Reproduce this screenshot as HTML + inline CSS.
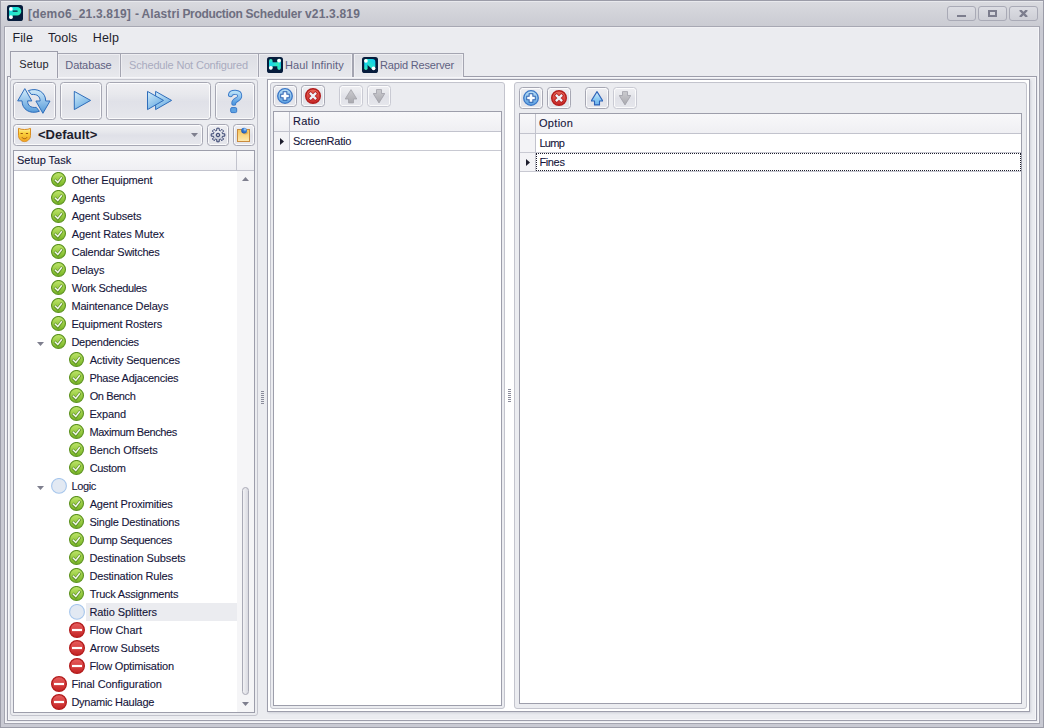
<!DOCTYPE html>
<html><head><meta charset="utf-8"><title>Alastri Production Scheduler</title>
<style>
*{box-sizing:border-box;margin:0;padding:0}
html,body{width:1044px;height:728px;overflow:hidden}
body{position:relative;background:#c9cad3;font-family:"Liberation Sans",sans-serif;font-size:11px;color:#1e1e2d}
.abs{position:absolute;display:block}
div{position:absolute}
/* window frame */
#frame{left:0;top:0;width:1044px;height:728px;border:1px solid #9b9ca8}
#title{left:1px;top:0;width:1042px;height:27px;background:linear-gradient(#dadbe0 0,#d2d3d9 45%,#cacbd2 100%);border-top:1px solid #9b9ca8}
#title:before{content:"";position:absolute;left:0;top:0;width:100%;height:1px;background:#e8e9ed}
#ttext{left:0;top:7px;font-size:12px;font-weight:bold;color:#6d6e80;white-space:nowrap;letter-spacing:-0.02px}
#client{left:4px;top:27px;width:1036px;height:697px;background:#ebecf0;border:1px solid #a4a5b0;border-top:none}
#client:before{content:"";position:absolute;left:0;top:0;right:0;bottom:0;border:1px solid #f6f6f9;border-top-color:#f1f1f4}
.wb{top:6px;width:29px;height:15px;border:1px solid #a9aab6;border-radius:3px;background:linear-gradient(#dcdde3,#cecfd6)}
.menu{top:31px;font-size:12.5px;color:#1e1e2d;white-space:nowrap}
/* tabs */
.tab{top:53px;height:24px;border:1px solid #a4a5b1;border-bottom:none;background:linear-gradient(#dddee4,#e2e3e8 50%,#e8e9ed);white-space:nowrap;box-shadow:inset 1px 1px 0 #eeeef2,inset -1px 0 0 #eeeef2}
.tab span{position:absolute;top:5px;font-size:11px;color:#5f6182;letter-spacing:-0.2px}
#page{left:7px;top:76px;width:1030px;height:645px;border:1px solid #9d9eab;background:#ebecf0}
#page:before{content:"";position:absolute;left:0;top:0;right:0;bottom:0;border:1px solid #f6f6f9}
.grp{border:1px solid #c3c4cd;border-radius:3px;background:#ebecf0}
.btn{border:1px solid #a6a7b3;border-radius:3.5px;background:linear-gradient(#efeff3 0,#e8e9ed 30%,#e0e1e8 52%,#e6e7ec 100%);box-shadow:inset 0 0 0 1px rgba(255,255,255,.8)}
.btn.dis{border-color:#c9cad3}
.grid{border:1px solid #9d9eab;background:#fff}
.hdr{left:0;top:0;right:0;height:20px;background:linear-gradient(#f8f8fa,#efeff3);border-bottom:1px solid #c2c3cd}
.tx{height:18px;line-height:18px;white-space:nowrap;font-size:11px;letter-spacing:-0.22px;color:#15153a;-webkit-text-stroke:.1px #15153a}
.sel{left:86px;width:151px;height:18px;background:#ebecf0}
.vline{width:1px;background:#c2c3cd}
.hline{height:1px;background:#c8c9d2}
</style></head><body>
<svg width="0" height="0" style="position:absolute">
<defs>
<linearGradient id="gg" x1="0" y1="0" x2="0" y2="1"><stop offset="0" stop-color="#bfe66a"/><stop offset="1" stop-color="#76b422"/></linearGradient>
<linearGradient id="rg" x1="0" y1="0" x2="0" y2="1"><stop offset="0" stop-color="#e86060"/><stop offset="1" stop-color="#c42222"/></linearGradient>
<linearGradient id="bg1" x1="0" y1="0" x2="0" y2="1"><stop offset="0" stop-color="#bfe2f7"/><stop offset="1" stop-color="#5a9fe0"/></linearGradient><linearGradient id="rg2" x1="0" y1="0" x2="0" y2="1"><stop offset="0" stop-color="#ea6a5a"/><stop offset="1" stop-color="#c82626"/></linearGradient>
<linearGradient id="bg2" x1="0" y1="0" x2="0" y2="1"><stop offset="0" stop-color="#bfe0f8"/><stop offset="1" stop-color="#3f86cf"/></linearGradient>
<linearGradient id="cy" gradientUnits="userSpaceOnUse" x1="2" y1="2" x2="13" y2="12"><stop offset="0" stop-color="#10d8f0"/><stop offset="1" stop-color="#38f0b0"/></linearGradient>
<linearGradient id="cy2" gradientUnits="userSpaceOnUse" x1="0" y1="2" x2="0" y2="13"><stop offset="0" stop-color="#3cf0b4"/><stop offset=".45" stop-color="#14d2f0"/><stop offset="1" stop-color="#3cf0b4"/></linearGradient>
<linearGradient id="cy3" gradientUnits="userSpaceOnUse" x1="3" y1="0" x2="13" y2="0"><stop offset="0" stop-color="#14d2f0"/><stop offset="1" stop-color="#3cf0a8"/></linearGradient>
<linearGradient id="cy4" gradientUnits="userSpaceOnUse" x1="13" y1="2" x2="5" y2="10"><stop offset="0" stop-color="#0cc8f4"/><stop offset="1" stop-color="#30ecc0"/></linearGradient>
<linearGradient id="gr" x1="0" y1="0" x2="0" y2="1"><stop offset="0" stop-color="#d4d4d8"/><stop offset="1" stop-color="#9c9ca4"/></linearGradient>
<linearGradient id="yl" x1="0" y1="0" x2="0" y2="1"><stop offset="0" stop-color="#fbd25a"/><stop offset="1" stop-color="#fde9a8"/></linearGradient>

<linearGradient id="tri" x1="0" y1="0" x2="0.6" y2="1"><stop offset="0" stop-color="#d6eefb"/><stop offset="1" stop-color="#69ace2"/></linearGradient>
<linearGradient id="arw" gradientUnits="userSpaceOnUse" x1="0" y1="88" x2="0" y2="114"><stop offset="0" stop-color="#d9f0fc"/><stop offset="1" stop-color="#4f96d8"/></linearGradient>
<linearGradient id="qg" x1="0" y1="0" x2="0" y2="1"><stop offset="0" stop-color="#b4def7"/><stop offset="1" stop-color="#559be0"/></linearGradient>
<linearGradient id="mk" x1="0" y1="0" x2="0" y2="1"><stop offset="0" stop-color="#fff3a8"/><stop offset=".35" stop-color="#fad23c"/><stop offset="1" stop-color="#f0a222"/></linearGradient>
<linearGradient id="nt" x1="0" y1="0" x2="0" y2="1"><stop offset="0" stop-color="#f5c55c"/><stop offset="1" stop-color="#fdeab0"/></linearGradient>
<linearGradient id="gearg" x1="0" y1="0" x2="0" y2="1"><stop offset="0" stop-color="#fafbfd"/><stop offset="1" stop-color="#c3c8d4"/></linearGradient>
<linearGradient id="upb" x1="0" y1="0" x2="0" y2="1"><stop offset="0" stop-color="#dcf1fc"/><stop offset=".55" stop-color="#8ccaf3"/><stop offset="1" stop-color="#6cb2ec"/></linearGradient>
<linearGradient id="upg" x1="0" y1="0" x2="0" y2="1"><stop offset="0" stop-color="#cbcbcf"/><stop offset="1" stop-color="#a9a9af"/></linearGradient>
<radialGradient id="pin" cx=".65" cy=".3" r=".7"><stop offset="0" stop-color="#b8dcf8"/><stop offset=".45" stop-color="#3a7fd6"/><stop offset="1" stop-color="#1f57b0"/></radialGradient>
<path id="dnarrow" d="M6 13.9L0.2 4.5H3.5V0.6H8.5V4.5H11.8z"/><path id="uparrow" d="M6 0.6L11.8 10H8.5V13.9H3.5V10H0.2z"/>
<g id="ic-g"><circle cx="7.5" cy="7.45" r="6.95" fill="url(#gg)" stroke="#5e9322" stroke-width="1.15"/><path d="M3.5 7.6l3.3 3.2 4.4-5.9" fill="none" stroke="#4a7a1e" stroke-width="3" opacity=".72"/><path d="M3.9 7.7l2.9 2.8 4-5.3" fill="none" stroke="#f4f8ee" stroke-width="1.45"/></g>
<g id="ic-r"><circle cx="8" cy="8" r="7.35" fill="url(#rg)" stroke="#b21a1a" stroke-width="1.3"/><rect x="3" y="6.9" width="10" height="2.2" fill="#fff"/></g>
<g id="ic-e"><circle cx="8" cy="7.9" r="7.4" fill="#e2e9f3" stroke="#a6c6ec" stroke-width="1.1"/></g>
<g id="ic-add"><circle cx="8" cy="8" r="7.3" fill="url(#bg1)" stroke="#3a76c6" stroke-width="1.3"/><path d="M8 3.3v9.4M3.3 8h9.4" stroke="#2c60b0" stroke-width="4.7"/><path d="M8 4.2v7.6M4.2 8h7.6" stroke="#fbfdff" stroke-width="2.7"/></g>
<g id="ic-del"><circle cx="8" cy="8" r="7.3" fill="url(#rg2)" stroke="#b21c1c" stroke-width="1.4"/><path d="M4.3 4.3l7.4 7.4M11.7 4.3l-7.4 7.4" stroke="#b02020" stroke-width="3.9"/><path d="M4.9 4.9l6.2 6.2M11.1 4.9l-6.2 6.2" stroke="#eef3f9" stroke-width="2.3"/></g>
</defs></svg>

<div id="frame"></div>
<div id="title"></div><div style="left:4px;top:26px;width:1036px;height:1px;background:#a7a8b3"></div>
<svg class="abs" style="left:7px;top:5px" width="16" height="16"><rect width="16" height="16" rx="2.6" fill="#061c3c"/><path d="M3.9 12.2V3.8H10.1a2.4 2.4 0 0 1 0 4.8H3.9" fill="none" stroke="url(#cy)" stroke-width="3.6" stroke-linejoin="round"/><circle cx="3.9" cy="3.9" r="1.85" fill="#fff"/><circle cx="3.9" cy="12.2" r="1.85" fill="#fff"/></svg>
<div id="ttext"><span style="position:absolute;left:28.00px;top:0;letter-spacing:0.187px">[demo6_21.3.819]</span><span style="position:absolute;left:135.00px;top:0;letter-spacing:0.000px">-</span><span style="position:absolute;left:141.40px;top:0;letter-spacing:0.150px">Alastri</span><span style="position:absolute;left:182.40px;top:0;letter-spacing:-0.333px">Production</span><span style="position:absolute;left:245.60px;top:0;letter-spacing:-0.225px">Scheduler</span><span style="position:absolute;left:305.00px;top:0;letter-spacing:0.188px">v21.3.819</span></div>
<div class="wb" style="left:947px"><div style="left:9px;top:8px;width:9px;height:2px;background:#7c7d8d"></div></div>
<div class="wb" style="left:978px"><div style="left:9px;top:3px;width:9px;height:7px;border:2px solid #7c7d8d"></div></div>
<div class="wb" style="left:1009px"><svg class="abs" style="left:9px;top:3px" width="9" height="7"><path d="M1 0l7 7M8 0L1 7" stroke="#7c7d8d" stroke-width="2.4"/></svg></div>

<div id="client"></div>
<div class="menu" style="left:12.6px;letter-spacing:.05px">File</div>
<div class="menu" style="left:48px">Tools</div>
<div class="menu" style="left:92.8px;letter-spacing:.12px">Help</div>

<!-- tab page -->
<div id="page"></div>
<!-- tabs -->
<div class="tab" style="left:57px;width:64px"><span style="left:7.3px;letter-spacing:-.1px">Database</span></div>
<div class="tab" style="left:120px;width:139px"><span style="left:8px;color:#a9abbf;letter-spacing:-.17px">Schedule Not Configured</span></div>
<div class="tab" style="left:258px;width:95px"><span style="left:26px;letter-spacing:.1px">Haul Infinity</span>
 <svg class="abs" style="left:8px;top:3px" width="16" height="16"><rect width="16" height="16" rx="2.6" fill="#061c3c"/><path d="M3.8 3.9V10.7M12.1 3.6V11.1" fill="none" stroke="url(#cy2)" stroke-width="3.6" stroke-linecap="round"/><path d="M3.8 7.3H12.1" stroke="url(#cy3)" stroke-width="4"/><circle cx="12.1" cy="3.6" r="1.85" fill="#fff"/><circle cx="3.8" cy="10.8" r="1.85" fill="#fff"/></svg></div>
<div class="tab" style="left:353px;width:111px"><span style="left:26px;letter-spacing:-.17px">Rapid Reserver</span>
 <svg class="abs" style="left:8px;top:3px" width="16" height="16"><rect width="16" height="16" rx="2.6" fill="#061c3c"/><path d="M3.9 2.1H10.4Q13.4 2.1 13.4 5V9.4L12.9 10.8L10.6 12.6L4.5 7z" fill="url(#cy4)"/><path d="M3.9 3.8V11.2" fill="none" stroke="url(#cy2)" stroke-width="3.4" stroke-linecap="round"/><circle cx="3.9" cy="3.8" r="1.85" fill="#fff"/><circle cx="11.6" cy="11.3" r="1.85" fill="#fff"/></svg></div>
<div class="tab" style="left:10px;top:51px;width:48px;height:27px;background:#ebecf0;border-color:#9d9eab"><span style="left:8.3px;top:6px;color:#1e1e2d;letter-spacing:.12px">Setup</span></div>

<!-- left group -->
<div class="grp" style="left:10px;top:79px;width:248px;height:637px"></div>
<div class="btn" style="left:13px;top:82px;width:43px;height:38px"></div>
<div class="btn" style="left:60px;top:82px;width:42px;height:38px"></div>
<div class="btn" style="left:106px;top:82px;width:105px;height:38px"></div>
<div class="btn" style="left:215px;top:82px;width:40px;height:38px"></div>
<div class="btn" style="left:13px;top:124px;width:190px;height:22px"></div>
<div class="btn" style="left:207px;top:124px;width:22px;height:22px"></div>
<div class="btn" style="left:233px;top:124px;width:22px;height:22px"></div>
<div style="left:38px;top:127px;font-size:13px;font-weight:bold;color:#1e1e2d;line-height:16px">&lt;Default&gt;</div>
<svg class="abs" style="left:191px;top:133px" width="7" height="4"><path d="M0 0h7L3.5 4z" fill="#7e7f8e"/></svg>

<!-- tree -->
<div class="grid" style="left:13px;top:150px;width:242px;height:563px">
  <div class="hdr"></div>
  <div class="vline" style="left:222px;top:0;height:20px"></div>
  <div style="left:223px;top:20px;width:17px;height:541px;background:#f5f5f7"></div>
</div>
<div class="tx" style="left:17px;top:151px;height:19px;line-height:19px;letter-spacing:0">Setup Task</div>
<svg class="abs" style="left:51px;top:172px" width="16" height="16"><use href="#ic-g"/></svg>
<div class="tx" style="left:71.70px;top:171px;letter-spacing:-0.164px">Other Equipment</div>
<svg class="abs" style="left:51px;top:190px" width="16" height="16"><use href="#ic-g"/></svg>
<div class="tx" style="left:71.70px;top:189px;letter-spacing:-0.180px">Agents</div>
<svg class="abs" style="left:51px;top:208px" width="16" height="16"><use href="#ic-g"/></svg>
<div class="tx" style="left:71.70px;top:207px;letter-spacing:-0.150px">Agent Subsets</div>
<svg class="abs" style="left:51px;top:226px" width="16" height="16"><use href="#ic-g"/></svg>
<div class="tx" style="left:71.70px;top:225px;letter-spacing:-0.056px">Agent Rates Mutex</div>
<svg class="abs" style="left:51px;top:244px" width="16" height="16"><use href="#ic-g"/></svg>
<div class="tx" style="left:71.70px;top:243px;letter-spacing:-0.231px">Calendar Switches</div>
<svg class="abs" style="left:51px;top:262px" width="16" height="16"><use href="#ic-g"/></svg>
<div class="tx" style="left:71.40px;top:261px;letter-spacing:-0.100px">Delays</div>
<svg class="abs" style="left:51px;top:280px" width="16" height="16"><use href="#ic-g"/></svg>
<div class="tx" style="left:71.70px;top:279px;letter-spacing:-0.346px">Work Schedules</div>
<svg class="abs" style="left:51px;top:298px" width="16" height="16"><use href="#ic-g"/></svg>
<div class="tx" style="left:71.40px;top:297px;letter-spacing:-0.153px">Maintenance Delays</div>
<svg class="abs" style="left:51px;top:316px" width="16" height="16"><use href="#ic-g"/></svg>
<div class="tx" style="left:71.40px;top:315px;letter-spacing:-0.175px">Equipment Rosters</div>
<svg class="abs" style="left:37px;top:342px" width="7" height="4"><path d="M0 0h7L3.5 4z" fill="#7e7f8e"/></svg>
<svg class="abs" style="left:51px;top:334px" width="16" height="16"><use href="#ic-g"/></svg>
<div class="tx" style="left:71.40px;top:333px;letter-spacing:-0.236px">Dependencies</div>
<svg class="abs" style="left:69px;top:352px" width="16" height="16"><use href="#ic-g"/></svg>
<div class="tx" style="left:89.70px;top:351px;letter-spacing:-0.159px">Activity Sequences</div>
<svg class="abs" style="left:69px;top:370px" width="16" height="16"><use href="#ic-g"/></svg>
<div class="tx" style="left:89.40px;top:369px;letter-spacing:-0.238px">Phase Adjacencies</div>
<svg class="abs" style="left:69px;top:388px" width="16" height="16"><use href="#ic-g"/></svg>
<div class="tx" style="left:89.70px;top:387px;letter-spacing:-0.400px">On Bench</div>
<svg class="abs" style="left:69px;top:406px" width="16" height="16"><use href="#ic-g"/></svg>
<div class="tx" style="left:89.40px;top:405px;letter-spacing:-0.140px">Expand</div>
<svg class="abs" style="left:69px;top:424px" width="16" height="16"><use href="#ic-g"/></svg>
<div class="tx" style="left:89.40px;top:423px;letter-spacing:-0.407px">Maximum Benches</div>
<svg class="abs" style="left:69px;top:442px" width="16" height="16"><use href="#ic-g"/></svg>
<div class="tx" style="left:89.40px;top:441px;letter-spacing:-0.050px">Bench Offsets</div>
<svg class="abs" style="left:69px;top:460px" width="16" height="16"><use href="#ic-g"/></svg>
<div class="tx" style="left:89.70px;top:459px;letter-spacing:-0.340px">Custom</div>
<svg class="abs" style="left:37px;top:486px" width="7" height="4"><path d="M0 0h7L3.5 4z" fill="#7e7f8e"/></svg>
<svg class="abs" style="left:51px;top:478px" width="16" height="16"><use href="#ic-e"/></svg>
<div class="tx" style="left:71.40px;top:477px;letter-spacing:-0.350px">Logic</div>
<svg class="abs" style="left:69px;top:496px" width="16" height="16"><use href="#ic-g"/></svg>
<div class="tx" style="left:89.70px;top:495px;letter-spacing:-0.162px">Agent Proximities</div>
<svg class="abs" style="left:69px;top:514px" width="16" height="16"><use href="#ic-g"/></svg>
<div class="tx" style="left:89.40px;top:513px;letter-spacing:-0.211px">Single Destinations</div>
<svg class="abs" style="left:69px;top:532px" width="16" height="16"><use href="#ic-g"/></svg>
<div class="tx" style="left:89.40px;top:531px;letter-spacing:-0.354px">Dump Sequences</div>
<svg class="abs" style="left:69px;top:550px" width="16" height="16"><use href="#ic-g"/></svg>
<div class="tx" style="left:89.40px;top:549px;letter-spacing:-0.089px">Destination Subsets</div>
<svg class="abs" style="left:69px;top:568px" width="16" height="16"><use href="#ic-g"/></svg>
<div class="tx" style="left:89.40px;top:567px;letter-spacing:-0.162px">Destination Rules</div>
<svg class="abs" style="left:69px;top:586px" width="16" height="16"><use href="#ic-g"/></svg>
<div class="tx" style="left:89.70px;top:585px;letter-spacing:-0.238px">Truck Assignments</div>
<div class="sel" style="top:603px"></div>
<svg class="abs" style="left:69px;top:604px" width="16" height="16"><use href="#ic-e"/></svg>
<div class="tx" style="left:89.40px;top:603px;letter-spacing:-0.057px">Ratio Splitters</div>
<svg class="abs" style="left:69px;top:622px" width="16" height="16"><use href="#ic-r"/></svg>
<div class="tx" style="left:89.40px;top:621px;letter-spacing:-0.044px">Flow Chart</div>
<svg class="abs" style="left:69px;top:640px" width="16" height="16"><use href="#ic-r"/></svg>
<div class="tx" style="left:89.70px;top:639px;letter-spacing:-0.150px">Arrow Subsets</div>
<svg class="abs" style="left:69px;top:658px" width="16" height="16"><use href="#ic-r"/></svg>
<div class="tx" style="left:89.40px;top:657px;letter-spacing:-0.175px">Flow Optimisation</div>
<svg class="abs" style="left:51px;top:676px" width="16" height="16"><use href="#ic-r"/></svg>
<div class="tx" style="left:71.40px;top:675px;letter-spacing:-0.106px">Final Configuration</div>
<svg class="abs" style="left:51px;top:694px" width="16" height="16"><use href="#ic-r"/></svg>
<div class="tx" style="left:71.40px;top:693px;letter-spacing:-0.271px">Dynamic Haulage</div>
<svg class="abs" style="left:242px;top:177px" width="7" height="4"><path d="M0 4h7L3.5 0z" fill="#7e7f8e"/></svg>
<svg class="abs" style="left:242px;top:702px" width="7" height="4"><path d="M0 0h7L3.5 4z" fill="#7e7f8e"/></svg>
<div style="left:242px;top:487px;width:7px;height:208px;border:1px solid #a9aab6;border-radius:3.5px;background:linear-gradient(90deg,#f2f2f5,#d9dae1)"></div>

<!-- right outer panel -->
<div style="left:267px;top:79px;width:763px;height:633px;border:1px solid #9d9eab;background:#fff;box-shadow:1px 1px 2px rgba(110,112,135,.22)"></div>
<!-- middle group -->
<div class="grp" style="left:270px;top:82px;width:235px;height:627px"></div>
<div class="btn" style="left:273px;top:85px;width:24px;height:22px"></div>
<div class="btn" style="left:301px;top:85px;width:24px;height:22px"></div>
<div class="btn dis" style="left:339px;top:85px;width:24px;height:22px"></div>
<div class="btn dis" style="left:367px;top:85px;width:24px;height:22px"></div>
<svg class="abs" style="left:277px;top:88px" width="16" height="16"><use href="#ic-add"/></svg>
<svg class="abs" style="left:305px;top:88px" width="16" height="16"><use href="#ic-del"/></svg>
<div class="grid" style="left:273px;top:111px;width:229px;height:595px">
  <div class="hdr"></div>
  <div class="vline" style="left:15px;top:0;height:38px"></div>
  <div style="left:0;top:20px;width:15px;height:18px;background:#f3f3f6"></div>
  <div class="hline" style="left:0;top:38px;right:0"></div>
</div>
<div class="tx" style="left:293px;top:112px;height:19px;line-height:19px;letter-spacing:.25px">Ratio</div>
<div class="tx" style="left:293px;top:132px">ScreenRatio</div>
<svg class="abs" style="left:280px;top:138px" width="4" height="7"><path d="M0 0v7l4-3.5z" fill="#1e1e2d"/></svg>

<!-- right group -->
<div class="grp" style="left:514px;top:82px;width:513px;height:627px"></div>
<div class="btn" style="left:519px;top:87px;width:24px;height:22px"></div>
<div class="btn" style="left:547px;top:87px;width:24px;height:22px"></div>
<div class="btn" style="left:585px;top:87px;width:24px;height:22px"></div>
<div class="btn dis" style="left:613px;top:87px;width:24px;height:22px"></div>
<svg class="abs" style="left:523px;top:90px" width="16" height="16"><use href="#ic-add"/></svg>
<svg class="abs" style="left:551px;top:90px" width="16" height="16"><use href="#ic-del"/></svg>
<div class="grid" style="left:519px;top:113px;width:503px;height:591px">
  <div class="hdr"></div>
  <div class="vline" style="left:15px;top:0;height:57px"></div>
  <div style="left:0;top:20px;width:15px;height:37px;background:#f3f3f6"></div>
  <div class="hline" style="left:0;top:38px;right:0"></div>
  <div class="hline" style="left:0;top:57px;right:0"></div>
</div>
<div class="tx" style="left:539px;top:114px;height:19px;line-height:19px;letter-spacing:.3px">Option</div>
<div class="tx" style="left:539.4px;top:134px;letter-spacing:-.65px">Lump</div>
<div class="tx" style="left:539.4px;top:153px;letter-spacing:-.35px">Fines</div>
<svg class="abs" style="left:526px;top:159px" width="4" height="7"><path d="M0 0v7l4-3.5z" fill="#1e1e2d"/></svg>
<div style="left:536px;top:153px;width:485px;height:18px;border:1px dotted #1e1e2d"></div>


<!-- big icons -->
<svg class="abs" style="left:14px;top:84px" width="42" height="34" viewBox="14 84 42 34">
 <path d="M24.8 88.6L31.8 100.9H27.6C27.6 105.2 30.2 108 36.3 107.4L39.4 111.3C30 114.6 22 109.5 22 100.9H17.7z" fill="url(#arw)" stroke="#2e6dbb" stroke-width="1" stroke-linejoin="round"/>
 <path d="M42.9 113.3L35.9 101H40.1C40.1 96.7 37.5 93.9 31.4 94.5L28.3 90.6C37.7 87.3 45.7 92.4 45.7 101H50z" fill="url(#arw)" stroke="#2e6dbb" stroke-width="1" stroke-linejoin="round"/>
</svg>
<svg class="abs" style="left:72px;top:88px" width="22" height="24" viewBox="72 88 22 24"><path d="M74.3 91.4V109.6L90.6 100.4z" fill="url(#tri)" stroke="#2e6dbb" stroke-width="1" stroke-linejoin="round"/></svg>
<svg class="abs" style="left:145px;top:88px" width="30" height="24" viewBox="145 88 30 24"><path d="M155.6 91.4V109.6L171.6 100.4z" fill="url(#tri)" stroke="#2e6dbb" stroke-width="1" stroke-linejoin="round"/><path d="M147.5 91.4V109.6L163.5 100.4z" fill="url(#tri)" stroke="#2e6dbb" stroke-width="1" stroke-linejoin="round"/></svg>
<svg class="abs" style="left:225px;top:87px" width="20" height="28" viewBox="225 87 20 28">
 <path d="M230.5 94.6C231.3 91.7 239.5 91.1 239.7 95.8C239.9 99.8 233.8 99.6 233.8 103.2" fill="none" stroke="#3a7ac9" stroke-width="5" stroke-linecap="round"/>
 <path d="M230.5 94.6C231.3 91.7 239.5 91.1 239.7 95.8C239.9 99.8 233.8 99.6 233.8 103.2" fill="none" stroke="url(#qg)" stroke-width="3.2" stroke-linecap="round"/>
 <rect x="230.7" y="107.6" width="6" height="5" rx="1.3" fill="#5ea2e2" stroke="#3a7ac9" stroke-width="1"/>
</svg>
<!-- mask -->
<svg class="abs" style="left:17px;top:127px" width="16" height="16" viewBox="17 127 16 16">
 <path d="M18.5 128.4C21 129.9 28 129.9 30.5 128.4V135.5C30.5 139 27.5 141.6 24.5 141.6C21.5 141.6 18.5 139 18.5 135.5z" fill="url(#mk)" stroke="#d98c22" stroke-width="1" stroke-linejoin="round"/>
 <path d="M20.6 133.5h2.2M25.9 133.5h2.2" stroke="#9a5210" stroke-width="1"/>
 <path d="M21.9 137.2C23 139.2 26 139.2 27.1 137.2" fill="none" stroke="#a8600f" stroke-width="1"/>
</svg>
<!-- gear -->
<svg class="abs" style="left:210px;top:127px" width="16" height="16" viewBox="-8 -8 16 16">
 <path d="M-1.25 -4.53L-1.17 -6.80L1.17 -6.80L1.25 -4.53L2.32 -4.09L3.98 -5.63L5.63 -3.98L4.09 -2.32L4.53 -1.25L6.80 -1.17L6.80 1.17L4.53 1.25L4.09 2.32L5.63 3.98L3.98 5.63L2.32 4.09L1.25 4.53L1.17 6.80L-1.17 6.80L-1.25 4.53L-2.32 4.09L-3.98 5.63L-5.63 3.98L-4.09 2.32L-4.53 1.25L-6.80 1.17L-6.80 -1.17L-4.53 -1.25L-4.09 -2.32L-5.63 -3.98L-3.98 -5.63L-2.32 -4.09z" fill="url(#gearg)" stroke="#34416e" stroke-width="1" stroke-linejoin="round"/>
 <circle r="1.8" fill="#b4b8c4" stroke="#34416e" stroke-width="1"/>
</svg>
<!-- note -->
<svg class="abs" style="left:236px;top:127px" width="16" height="16" viewBox="236 127 16 16">
 <rect x="237.5" y="129.5" width="12" height="12" fill="url(#nt)" stroke="#c98b3e" stroke-width="1"/>
 <ellipse cx="245.3" cy="132.8" rx="2.6" ry="1.6" fill="#c8861e" opacity=".45"/>
 <circle cx="244.1" cy="130.6" r="2.9" fill="url(#pin)"/>
</svg>
<!-- arrows -->
<svg class="abs" style="left:345px;top:88.5px" width="12" height="15"><use href="#uparrow" fill="url(#upg)" stroke="#a3a3aa" stroke-width=".8"/></svg>
<svg class="abs" style="left:373px;top:88.5px" width="12" height="15"><use href="#dnarrow" fill="url(#upg)" stroke="#a0a0a8" stroke-width=".8"/></svg>
<svg class="abs" style="left:591px;top:90.5px" width="12" height="15"><use href="#uparrow" fill="url(#upb)" stroke="#2c62b8" stroke-width="1.1" stroke-linejoin="round"/></svg>
<svg class="abs" style="left:619px;top:90.5px" width="12" height="15"><use href="#dnarrow" fill="url(#upg)" stroke="#a0a0a8" stroke-width=".8"/></svg>
<!-- splitter dots -->
<div style="left:261px;top:391px;width:3px;height:13px;background:repeating-linear-gradient(#8a8b9a 0,#8a8b9a 1px,transparent 1px,transparent 2px)"></div>
<div style="left:508px;top:389px;width:3px;height:13px;background:repeating-linear-gradient(#8a8b9a 0,#8a8b9a 1px,transparent 1px,transparent 2px)"></div>
</body></html>
